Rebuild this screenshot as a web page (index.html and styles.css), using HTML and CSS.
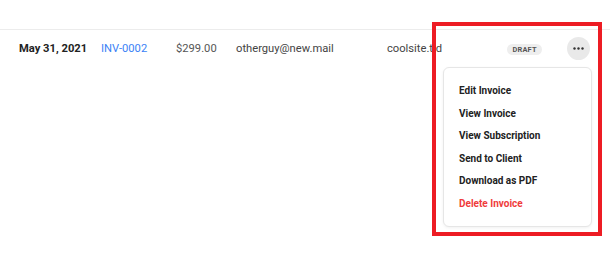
FILE: index.html
```html
<!DOCTYPE html>
<html>
<head>
<meta charset="utf-8">
<link rel="stylesheet" href="styles.css">
</head>
<body>
<div class="page">
  <div class="top"></div>
  <div class="row">
    <span class="date">May 31, 2021</span>
    <a class="inv">INV-0002</a>
    <span class="amount">$299.00</span>
    <span class="email">otherguy@new.mail</span>
    <span class="site">coolsite.tld</span>
    <span class="badge-cell"><span class="badge">DRAFT</span></span>
    <span class="actions">
      <button class="more" aria-label="More">
        <svg width="11" height="3" viewBox="0 0 11 3"><circle cx="1.5" cy="1.5" r="1.2" fill="#333"/><circle cx="5.5" cy="1.5" r="1.2" fill="#333"/><circle cx="9.5" cy="1.5" r="1.2" fill="#333"/></svg>
      </button>
    </span>
  </div>
  <ul class="menu">
    <li>Edit Invoice</li>
    <li>View Invoice</li>
    <li>View Subscription</li>
    <li>Send to Client</li>
    <li>Download as PDF</li>
    <li class="danger">Delete Invoice</li>
  </ul>
  <div class="highlight"></div>
</div>
</body>
</html>
```
FILE: styles.css
```css
html, body {
  margin: 0;
  padding: 0;
  background: #fff;
}
body {
  font-family: Roboto, "Liberation Sans", sans-serif;
  width: 610px;
  height: 254px;
  overflow: hidden;
}
.page {
  position: relative;
  height: 254px;
}
.top {
  height: 29px;
  border-bottom: 1px solid #ececec;
}
.row {
  display: grid;
  grid-template-columns: 82px 75px 60px 151px 120px 60px 23px;
  align-items: center;
  padding: 7px 0 7px 19px;
  font-size: 11.2px;
  color: #555;
}
.date {
  font-weight: 700;
  color: #222;
}
.inv {
  color: #3b82f6;
}
.email, .site {
  color: #444;
}
.badge {
  display: inline-block;
  background: #eeeeee;
  color: #555;
  font-size: 7.4px;
  font-weight: 700;
  line-height: 11px;
  padding: 0 5.5px;
  border-radius: 6px;
  letter-spacing: 0.2px;
}
.more {
  width: 23px;
  height: 23px;
  border-radius: 50%;
  border: none;
  background: #e9e9e9;
  padding: 0;
  display: flex;
  align-items: center;
  justify-content: center;
}
.menu {
  position: absolute;
  top: 67px;
  left: 443px;
  width: 149px;
  box-sizing: border-box;
  margin: 0;
  padding: 12px 0 10px 15px;
  list-style: none;
  background: #fff;
  border: 1px solid #e6e6e6;
  border-radius: 6px;
  box-shadow: 0 1px 3px rgba(0,0,0,0.06);
}
.menu li {
  font-size: 10px;
  font-weight: 700;
  color: #222;
  line-height: 22.6px;
}
.menu li.danger {
  color: #ef3b3b;
}
.highlight {
  position: absolute;
  left: 432px;
  top: 22px;
  width: 170px;
  height: 214px;
  box-sizing: border-box;
  border: 4.5px solid #ed1c24;
  pointer-events: none;
}
```
